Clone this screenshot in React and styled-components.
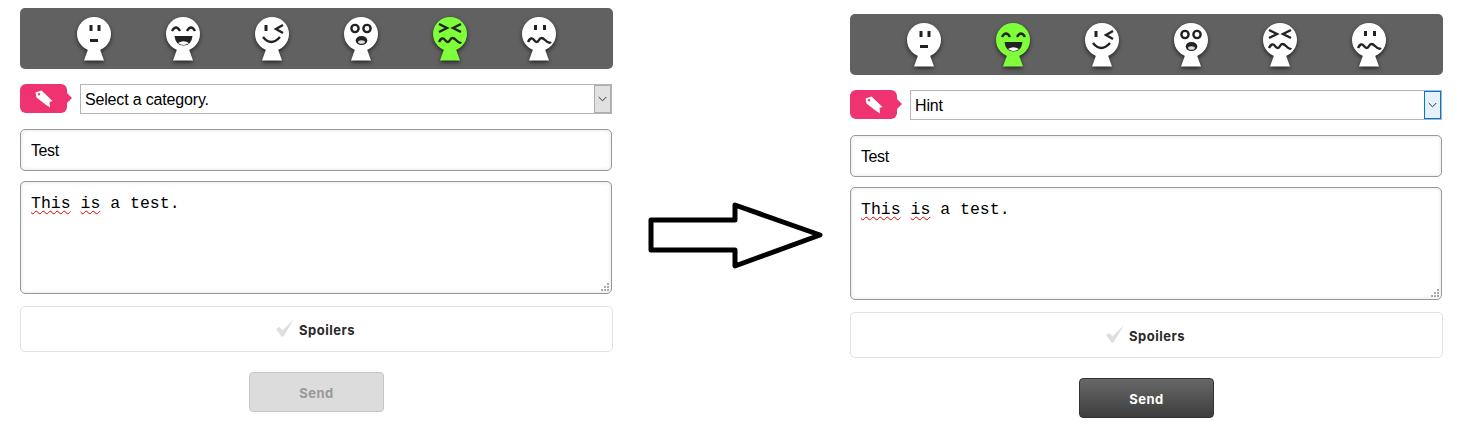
import React from "react";
import styled, { createGlobalStyle } from "styled-components";

const Global = createGlobalStyle`
  html, body { margin: 0; padding: 0; background: #fff; }
  body { font-family: "Liberation Sans", Arial, sans-serif; overflow: hidden; }
`;
const Page = styled.div`
  display: flex; align-items: flex-start; width: 1460px; height: 443px; padding-left: 20px; box-sizing: border-box;
`;
const Panel = styled.section`
  width: 593px; flex: none; margin-top: ${(p) => p.$top}px;
`;
const MoodBar = styled.div`
  display: flex; justify-content: center; gap: 53px; height: 61px; padding-top: 8px; box-sizing: border-box;
  background: #616161; border-radius: 5px;
`;
const FaceSvg = styled.svg`
  width: 36px; height: 46px; flex: none; color: #fff; filter: drop-shadow(0 2px 2px rgba(0,0,0,.6));
`;
const Row = styled.div`
  display: flex; align-items: flex-start; margin-top: 15px; height: 30px;
`;
const Tag = styled.div`
  position: relative; width: 47px; height: 29px; background: #ee3370; border-radius: 6px;
  display: flex; align-items: center; justify-content: center; box-sizing: border-box;
  &::after {
    content: ""; position: absolute; left: 45px; top: 7px;
    border: 7.5px solid transparent; border-left: 7.5px solid #ee3370; border-right: 0;
  }
`;
const SelectBox = styled.div`
  margin-left: 13px; width: 532px; height: 30px; box-sizing: border-box; border: 1px solid #b5b5b5;
  display: flex; align-items: stretch; justify-content: space-between;
  font-size: 16px; letter-spacing: -.17px; line-height: 30px; color: #000; padding-left: 4px;
`;
const SelectArrow = styled.div`
  width: 17px; box-sizing: border-box; display: flex; align-items: center; justify-content: center;
  background: ${(p) => (p.$focus ? "#e5f1fb" : "#e1e1e1")};
  border: 1px solid ${(p) => (p.$focus ? "#0078d7" : "#adadad")};
  color: #333;
`;
const TextInput = styled.div`
  margin-top: 15px; width: 592px; height: 42px; box-sizing: border-box; border: 1px solid #999; border-radius: 5px;
  box-shadow: inset 0 0 4px rgba(0,0,0,.12);
  padding-left: 10px; font-size: 16px; letter-spacing: -.4px; line-height: 42px; color: #000;
`;
const TextArea = styled.div`
  position: relative; margin-top: 10px; width: 592px; height: 113px; box-sizing: border-box;
  border: 1px solid #999; border-radius: 5px; box-shadow: inset 0 0 4px rgba(0,0,0,.12);
  padding: 12px 10px; font-family: "Liberation Mono", "Courier New", monospace; font-size: 16.5px; line-height: 19px; color: #000;
`;
const Misspelled = styled.span`
  text-decoration: underline wavy #e00000 1px; text-underline-offset: 2px;
`;
const Grip = styled.svg`
  position: absolute; right: 1px; bottom: 1px; width: 10px; height: 10px; color: #aaa;
`;
const Spoilers = styled.div`
  margin-top: 12px; height: 46px; box-sizing: border-box; border: 1px solid #e2e2e2; border-radius: 5px;
  display: flex; align-items: center; justify-content: center; gap: 5px; padding: 2px 2px 0 0;
  font-family: "Inter", "Open Sans", sans-serif; font-weight: 700; font-size: 13px; letter-spacing: .5px; color: #2a2a2a;
`;
const CheckIcon = styled.svg`
  flex: none; margin-top: -5px;
`;
const SendRow = styled.div`
  display: flex; justify-content: center; margin-top: 20px; padding-right: 1px;
`;
const SendButton = styled.button`
  width: 135px; height: 40px; box-sizing: border-box; border-radius: 4px; padding: 2px 0 0 1px;
  border: 1px solid ${(p) => (p.disabled ? "#c6c6c6" : "#333")};
  background: ${(p) => (p.disabled ? "#dcdcdc" : "linear-gradient(#686868, #3d3d3d)")};
  color: ${(p) => (p.disabled ? "#999" : "#fff")};
  font-family: "Inter", "Open Sans", sans-serif; font-weight: 700; font-size: 13px; letter-spacing: .5px;
`;
const Arrow = styled.svg`
  flex: none; width: 176px; height: 68px; margin: 202px 26px 0 35px;
`;

const ink = { fill: "none", stroke: "#222", strokeWidth: 2.4 };
const faces = [
  <>
    <rect x="13.5" y="9" width="3" height="6" fill="#222" />
    <rect x="21.5" y="9" width="3" height="6" fill="#222" />
    <rect x="14" y="23" width="8" height="3" fill="#222" />
  </>,
  <>
    <path d="M7 15 Q11 8 15 15 M22 15 Q26 8 30 15" {...ink} />
    <path d="M9.5 20 H27.5 Q26.5 29.5 18.5 29.5 Q10.5 29.5 9.5 20Z" fill="#222" />
    <path d="M13 27 Q18.5 23.5 24 27 Q18.5 31 13 27Z" fill="#fff" />
  </>,
  <>
    <rect x="10.5" y="9" width="3" height="6" fill="#222" />
    <path d="M29 9 L22 13 L29 17" {...ink} />
    <path d="M9 21 Q17 31 26 21" {...ink} />
  </>,
  <>
    <circle cx="12" cy="12.5" r="3.6" {...ink} />
    <circle cx="24" cy="12.5" r="3.6" {...ink} />
    <ellipse cx="18.5" cy="24.5" rx="5.8" ry="4.6" fill="#222" />
    <ellipse cx="18.5" cy="26" rx="3.4" ry="1.8" fill="#ddd" />
  </>,
  <>
    <path d="M7 8 L15 12 L7 16 M29 8 L21 12 L29 16" {...ink} />
    <path d="M7 26 Q10 20 13 24 T18 24 T24 24 T29 26" {...ink} />
  </>,
  <>
    <rect x="13" y="9" width="3" height="5" fill="#222" />
    <rect x="22" y="9" width="3" height="5" fill="#222" />
    <path d="M7 26 Q10 20 13 24 T18 24 T24 24 T30 26" {...ink} />
  </>,
];

function Face({ index, active }) {
  return (
    <FaceSvg viewBox="0 0 36 46" style={active ? { color: "#7fff3a" } : undefined}>
      <circle cx="18" cy="18" r="17" fill="currentColor" />
      <path d="M8 44.5 L12.5 32 H23.5 L28 44.5Z" fill="currentColor" />
      {faces[index]}
    </FaceSvg>
  );
}

function Form({ top, activeFace, value, focus, ready }) {
  return (
    <Panel $top={top}>
      <MoodBar>
        {faces.map((_, i) => <Face key={i} index={i} active={i === activeFace} />)}
      </MoodBar>
      <Row>
        <Tag>
          <svg width="18" height="18" viewBox="0 0 18 18">
            <path fillRule="evenodd" fill="#fff" d="M0.5 2.5 L6.5 0.5 L17.5 11 L14.5 12 L15 17.5 L10.5 14.5 L1.5 7.5Z M4 3 a1.2 1.2 0 1 0 .01 0Z" />
          </svg>
        </Tag>
        <SelectBox>
          {value}
          <SelectArrow $focus={focus}>
            <svg width="9" height="6" viewBox="0 0 9 6"><path d="M.7 1 L4.5 4.8 L8.3 1" fill="none" stroke="currentColor" /></svg>
          </SelectArrow>
        </SelectBox>
      </Row>
      <TextInput>Test</TextInput>
      <TextArea>
        <Misspelled>This</Misspelled> <Misspelled>is</Misspelled> a test.
        <Grip viewBox="0 0 10 10">
          <g fill="currentColor">
            <rect x="7" y="1" width="2" height="2" />
            <rect x="4" y="4" width="2" height="2" /><rect x="7" y="4" width="2" height="2" />
            <rect x="1" y="7" width="2" height="2" /><rect x="4" y="7" width="2" height="2" /><rect x="7" y="7" width="2" height="2" />
          </g>
        </Grip>
      </TextArea>
      <Spoilers>
        <CheckIcon width="18" height="18" viewBox="0 0 18 18"><path d="M0 10 L3.5 8 L6.5 11.5 L18 0 L7.5 17.5 L5.5 17.5Z" fill="#dedede" /></CheckIcon>
        Spoilers
      </Spoilers>
      <SendRow>
        <SendButton disabled={!ready}>Send</SendButton>
      </SendRow>
    </Panel>
  );
}

export default function App() {
  return (
    <Page>
      <Global />
      <Form top={8} activeFace={4} value="Select a category." />
      <Arrow viewBox="0 0 176 68">
        <path d="M3 18 H87 V3 L172 33 L87 64 V48 H3Z" fill="#fff" stroke="#000" strokeWidth="5" strokeLinejoin="round" />
      </Arrow>
      <Form top={14} activeFace={1} value="Hint" focus ready />
    </Page>
  );
}
